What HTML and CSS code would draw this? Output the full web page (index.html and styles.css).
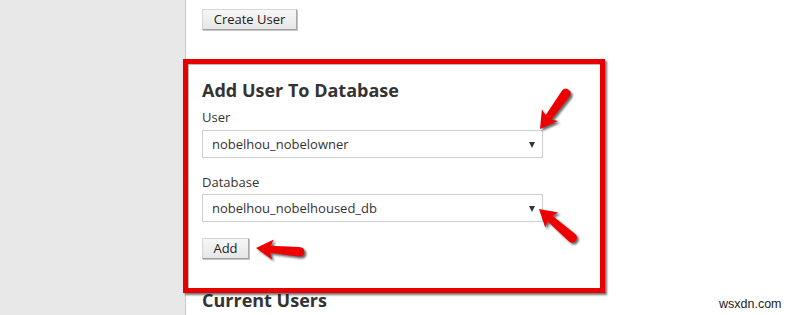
FILE: index.html
```html
<!DOCTYPE html>
<html>
<head>
<meta charset="utf-8">
<link rel="stylesheet" href="styles.css">
</head>
<body>
<div class="page">
  <aside class="sidebar"></aside>
  <main class="main">
    <button class="btn btn-create">Create User</button>
    <section class="add">
      <h2 class="heading">Add User To Database</h2>
      <div class="label label-user">User</div>
      <div class="select select-user"><span>nobelhou_nobelowner</span><i class="caret"></i></div>
      <div class="label label-db">Database</div>
      <div class="select select-db"><span>nobelhou_nobelhoused_db</span><i class="caret"></i></div>
      <button class="btn btn-add">Add</button>
    </section>
    <h2 class="heading heading-current">Current Users</h2>
  </main>
  <div class="redbox"></div>
  <svg class="arrows" width="792" height="315" viewBox="0 0 792 315">
    <defs>
      <path id="arr" d="M0,0 L17,-10 L14.5,-3.6 L43,-4.8 Q48.5,-5 48.5,0 Q48.5,5 43,4.8 L14.5,3.6 L17,10 Z"/>
    </defs>
    <use href="#arr" class="arrow" transform="translate(540,129) rotate(-54)"/>
    <use href="#arr" class="arrow" transform="translate(539,209) rotate(41)"/>
    <use href="#arr" class="arrow" transform="translate(256,248) rotate(5)"/>
  </svg>
  <div class="wm">wsxdn.com</div>
</div>
</body>
</html>
```
FILE: styles.css
```css
* { box-sizing: border-box; }
html, body { margin: 0; padding: 0; background: #fff; }
.page {
  position: relative;
  display: flex;
  width: 792px;
  height: 315px;
  overflow: hidden;
  font-family: "Open Sans", "DejaVu Sans", sans-serif;
  color: #333;
}
.sidebar {
  width: 186px;
  flex: none;
  background: #e8e8e8;
  border-right: 1px solid #c9c9c9;
}
.main {
  flex: 1;
  padding-left: 16px;
  display: flex;
  flex-direction: column;
  align-items: flex-start;
}
.btn {
  font-family: "Open Sans", "DejaVu Sans", sans-serif;
  font-size: 13px;
  color: #222;
  height: 21px;
  padding: 0 10px;
  line-height: 19px;
  background: linear-gradient(#f7f7f7, #e6e6e6);
  border: 1px solid #d6d6d6;
  border-right-color: #a8a8a8;
  border-bottom-color: #a0a0a0;
  box-shadow: 1px 1px 0 #c4c4c4;
  border-radius: 0;
}
.btn-create { margin-top: 9px; width: 95px; }
.add { display: flex; flex-direction: column; align-items: flex-start; }
.heading {
  margin: 48px 0 0;
  font-size: 18px;
  font-weight: 700;
  line-height: 24px;
  color: #333;
}
.label {
  font-size: 13px;
  line-height: 18px;
  color: #333;
}
.label-user { margin-top: 6px; }
.label-db { margin-top: 15px; }
.select {
  width: 341px;
  height: 28px;
  border: 1px solid #cfcfcf;
  background: #fff;
  display: flex;
  align-items: center;
  justify-content: space-between;
  padding: 0 7px 0 9px;
  font-size: 13px;
  line-height: 26px;
  color: #333;
}
.select-user { margin-top: 4px; }
.select-db { margin-top: 3px; }
.caret {
  width: 0;
  height: 0;
  border-left: 3.5px solid transparent;
  border-right: 3.5px solid transparent;
  border-top: 6px solid #333;
  margin-top: 1px;
}
.btn-add { margin-top: 16px; width: 47px; }
.heading-current { margin-top: 29px; }
.redbox {
  position: absolute;
  left: 183px;
  top: 59px;
  width: 422px;
  height: 234px;
  border: 5px solid #e60000;
  box-shadow: 2px 2px 2px rgba(0,0,0,0.55), inset 1px 1px 1px rgba(0,0,0,0.3);
}
.arrows {
  position: absolute;
  left: 0;
  top: 0;
  filter: drop-shadow(2px 2px 1.2px rgba(0,0,0,0.6));
}
.arrow { fill: #ee0000; }
.wm {
  position: absolute;
  left: 719px;
  top: 297px;
  font-family: "Liberation Sans", Arial, sans-serif;
  font-size: 12.5px;
  color: #222;
}
```
